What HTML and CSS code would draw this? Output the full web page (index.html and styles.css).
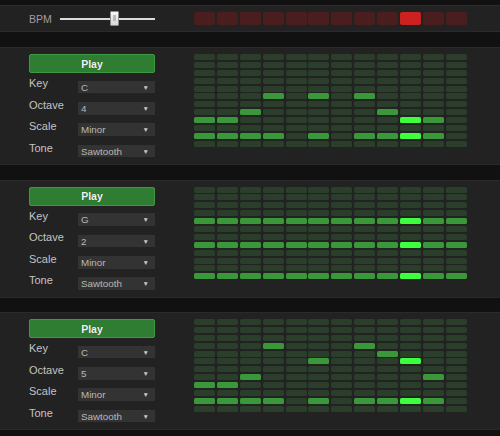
FILE: index.html
```html
<!DOCTYPE html>
<html>
<head>
<meta charset="utf-8">
<link rel="stylesheet" href="styles.css">
</head>
<body>
<div class="topbar">
  <span class="bpm-label">BPM</span>
  <div class="slider"><div class="track"></div><div class="thumb"></div></div>
  <div class="steps">
    <i></i><i></i><i></i><i></i><i></i><i></i><i></i><i></i><i></i><i class="on"></i><i></i><i></i>
  </div>
</div>
<div class="panels">
  <div class="panel">
    <div class="controls">
      <div class="play">Play</div>
      <div class="row"><span class="label">Key</span><div class="select"><span>C</span><span class="arrow">▼</span></div></div>
      <div class="row"><span class="label">Octave</span><div class="select"><span>4</span><span class="arrow">▼</span></div></div>
      <div class="row"><span class="label">Scale</span><div class="select"><span>Minor</span><span class="arrow">▼</span></div></div>
      <div class="row"><span class="label">Tone</span><div class="select"><span>Sawtooth</span><span class="arrow">▼</span></div></div>
    </div>
    <div class="grid">
      <div class="col"><i></i><i></i><i></i><i></i><i></i><i></i><i></i><i></i><i class="on"></i><i></i><i class="on"></i><i></i></div>
      <div class="col"><i></i><i></i><i></i><i></i><i></i><i></i><i></i><i></i><i class="on"></i><i></i><i class="on"></i><i></i></div>
      <div class="col"><i></i><i></i><i></i><i></i><i></i><i></i><i></i><i class="on"></i><i></i><i></i><i class="on"></i><i></i></div>
      <div class="col"><i></i><i></i><i></i><i></i><i></i><i class="on"></i><i></i><i></i><i></i><i></i><i class="on"></i><i></i></div>
      <div class="col"><i></i><i></i><i></i><i></i><i></i><i></i><i></i><i></i><i></i><i></i><i></i><i></i></div>
      <div class="col"><i></i><i></i><i></i><i></i><i></i><i class="on"></i><i></i><i></i><i></i><i></i><i class="on"></i><i></i></div>
      <div class="col"><i></i><i></i><i></i><i></i><i></i><i></i><i></i><i></i><i></i><i></i><i></i><i></i></div>
      <div class="col"><i></i><i></i><i></i><i></i><i></i><i class="on"></i><i></i><i></i><i></i><i></i><i class="on"></i><i></i></div>
      <div class="col"><i></i><i></i><i></i><i></i><i></i><i></i><i></i><i class="on"></i><i></i><i></i><i class="on"></i><i></i></div>
      <div class="col cur"><i></i><i></i><i></i><i></i><i></i><i></i><i></i><i></i><i class="on"></i><i></i><i class="on"></i><i></i></div>
      <div class="col"><i></i><i></i><i></i><i></i><i></i><i></i><i></i><i></i><i class="on"></i><i></i><i class="on"></i><i></i></div>
      <div class="col"><i></i><i></i><i></i><i></i><i></i><i></i><i></i><i></i><i></i><i></i><i></i><i></i></div>
    </div>
  </div>

  <div class="panel">
    <div class="controls">
      <div class="play">Play</div>
      <div class="row"><span class="label">Key</span><div class="select"><span>G</span><span class="arrow">▼</span></div></div>
      <div class="row"><span class="label">Octave</span><div class="select"><span>2</span><span class="arrow">▼</span></div></div>
      <div class="row"><span class="label">Scale</span><div class="select"><span>Minor</span><span class="arrow">▼</span></div></div>
      <div class="row"><span class="label">Tone</span><div class="select"><span>Sawtooth</span><span class="arrow">▼</span></div></div>
    </div>
    <div class="grid">
      <div class="col"><i></i><i></i><i></i><i></i><i class="on"></i><i></i><i></i><i class="on"></i><i></i><i></i><i></i><i class="on"></i></div>
      <div class="col"><i></i><i></i><i></i><i></i><i class="on"></i><i></i><i></i><i class="on"></i><i></i><i></i><i></i><i class="on"></i></div>
      <div class="col"><i></i><i></i><i></i><i></i><i class="on"></i><i></i><i></i><i class="on"></i><i></i><i></i><i></i><i class="on"></i></div>
      <div class="col"><i></i><i></i><i></i><i></i><i class="on"></i><i></i><i></i><i class="on"></i><i></i><i></i><i></i><i class="on"></i></div>
      <div class="col"><i></i><i></i><i></i><i></i><i class="on"></i><i></i><i></i><i class="on"></i><i></i><i></i><i></i><i class="on"></i></div>
      <div class="col"><i></i><i></i><i></i><i></i><i class="on"></i><i></i><i></i><i class="on"></i><i></i><i></i><i></i><i class="on"></i></div>
      <div class="col"><i></i><i></i><i></i><i></i><i class="on"></i><i></i><i></i><i class="on"></i><i></i><i></i><i></i><i class="on"></i></div>
      <div class="col"><i></i><i></i><i></i><i></i><i class="on"></i><i></i><i></i><i class="on"></i><i></i><i></i><i></i><i class="on"></i></div>
      <div class="col"><i></i><i></i><i></i><i></i><i class="on"></i><i></i><i></i><i class="on"></i><i></i><i></i><i></i><i class="on"></i></div>
      <div class="col cur"><i></i><i></i><i></i><i></i><i class="on"></i><i></i><i></i><i class="on"></i><i></i><i></i><i></i><i class="on"></i></div>
      <div class="col"><i></i><i></i><i></i><i></i><i class="on"></i><i></i><i></i><i class="on"></i><i></i><i></i><i></i><i class="on"></i></div>
      <div class="col"><i></i><i></i><i></i><i></i><i class="on"></i><i></i><i></i><i class="on"></i><i></i><i></i><i></i><i class="on"></i></div>
    </div>
  </div>

  <div class="panel">
    <div class="controls">
      <div class="play">Play</div>
      <div class="row"><span class="label">Key</span><div class="select"><span>C</span><span class="arrow">▼</span></div></div>
      <div class="row"><span class="label">Octave</span><div class="select"><span>5</span><span class="arrow">▼</span></div></div>
      <div class="row"><span class="label">Scale</span><div class="select"><span>Minor</span><span class="arrow">▼</span></div></div>
      <div class="row"><span class="label">Tone</span><div class="select"><span>Sawtooth</span><span class="arrow">▼</span></div></div>
    </div>
    <div class="grid">
      <div class="col"><i></i><i></i><i></i><i></i><i></i><i></i><i></i><i></i><i class="on"></i><i></i><i class="on"></i><i></i></div>
      <div class="col"><i></i><i></i><i></i><i></i><i></i><i></i><i></i><i></i><i class="on"></i><i></i><i class="on"></i><i></i></div>
      <div class="col"><i></i><i></i><i></i><i></i><i></i><i></i><i></i><i class="on"></i><i></i><i></i><i class="on"></i><i></i></div>
      <div class="col"><i></i><i></i><i></i><i class="on"></i><i></i><i></i><i></i><i></i><i></i><i></i><i class="on"></i><i></i></div>
      <div class="col"><i></i><i></i><i></i><i></i><i></i><i></i><i></i><i></i><i></i><i></i><i></i><i></i></div>
      <div class="col"><i></i><i></i><i></i><i></i><i></i><i class="on"></i><i></i><i></i><i></i><i></i><i class="on"></i><i></i></div>
      <div class="col"><i></i><i></i><i></i><i></i><i></i><i></i><i></i><i></i><i></i><i></i><i></i><i></i></div>
      <div class="col"><i></i><i></i><i></i><i class="on"></i><i></i><i></i><i></i><i></i><i></i><i></i><i class="on"></i><i></i></div>
      <div class="col"><i></i><i></i><i></i><i></i><i class="on"></i><i></i><i></i><i></i><i></i><i></i><i class="on"></i><i></i></div>
      <div class="col cur"><i></i><i></i><i></i><i></i><i></i><i class="on"></i><i></i><i></i><i></i><i></i><i class="on"></i><i></i></div>
      <div class="col"><i></i><i></i><i></i><i></i><i></i><i></i><i></i><i class="on"></i><i></i><i></i><i class="on"></i><i></i></div>
      <div class="col"><i></i><i></i><i></i><i></i><i></i><i></i><i></i><i></i><i></i><i></i><i></i><i></i></div>
    </div>
  </div>
</div>
</body>
</html>
```

FILE: styles.css
```css
* { box-sizing: border-box; }
html, body { margin: 0; background: #111; }
body {
  padding-top: 5px;
  width: 500px;
  height: 436px;
  overflow: hidden;
  font-family: "Liberation Sans", Arial, sans-serif;
}

.topbar {
  height: 27px;
  background: #222;
  border-top: 1px solid #2c2c2c;
  border-bottom: 1px solid #2a2a2a;
  display: flex;
  align-items: center;
  padding-left: 29px;
}
.bpm-label {
  width: 31px;
  font-size: 10.5px;
  color: #9f9f9f;
}
.slider {
  position: relative;
  width: 95px;
  height: 15px;
  display: flex;
  align-items: center;
}
.track {
  width: 100%;
  height: 2px;
  background: #dcdcdc;
}
.thumb {
  position: absolute;
  left: 50px;
  top: 0;
  width: 9px;
  height: 15px;
  background: linear-gradient(#f6f6f6, #d6d6d6);
  border: 1px solid #8a8a8a;
  border-radius: 1px;
}
.thumb::after {
  content: "";
  position: absolute;
  left: 2px;
  top: 3px;
  width: 3px;
  height: 6px;
  background: #b8b8b8;
}
.steps {
  margin-left: 39px;
  display: flex;
  gap: 1.9px;
}
.steps i {
  display: block;
  width: 21px;
  height: 13px;
  border-radius: 2px;
  background: #4a1e1e;
}
.steps i.on { background: #cc2121; }

.panels {
  display: flex;
  flex-direction: column;
  gap: 14.5px;
  margin-top: 15px;
}
.panel {
  height: 118px;
  background: #222;
  border-top: 1px solid #2a2a2a;
  border-bottom: 1px solid #292929;
  display: flex;
  padding: 6px 0 0 29px;
}
.controls {
  width: 126px;
  display: flex;
  flex-direction: column;
}
.play {
  height: 19px;
  margin-bottom: 3.3px;
  background: #2e7d32;
  border: 1px solid #3e9a42;
  border-radius: 2px;
  color: #f2f2f2;
  font-weight: bold;
  font-size: 10.5px;
  display: flex;
  align-items: center;
  justify-content: center;
  text-shadow: 0 0 1px rgba(0,0,0,0.4);
}
.row {
  height: 21.4px;
  display: flex;
  align-items: flex-start;
}
.label {
  width: 49px;
  font-size: 11px;
  line-height: 13px;
  margin-top: 1.2px;
  color: #c4c4c4;
}
.select {
  width: 77px;
  height: 12.6px;
  margin-top: 4.4px;
  background: #333;
  color: #b8b8b8;
  font-size: 9.8px;
  line-height: 13px;
  padding: 0 6px 0 3px;
  display: flex;
  justify-content: space-between;
}
.arrow {
  font-size: 6.5px;
  color: #c8c8c8;
}

.grid {
  margin-left: 39px;
  display: flex;
  gap: 1.9px;
}
.col {
  display: flex;
  flex-direction: column;
  gap: 1.9px;
}
.col i {
  display: block;
  width: 21px;
  height: 6px;
  border-radius: 1.5px;
  background: #2b3d2b;
}
.col i.on {
  background: #3a983a;
  box-shadow: 0 0 0 0.5px #1c2a1c;
}
.col.cur i.on { background: #3dff3d; }
```
